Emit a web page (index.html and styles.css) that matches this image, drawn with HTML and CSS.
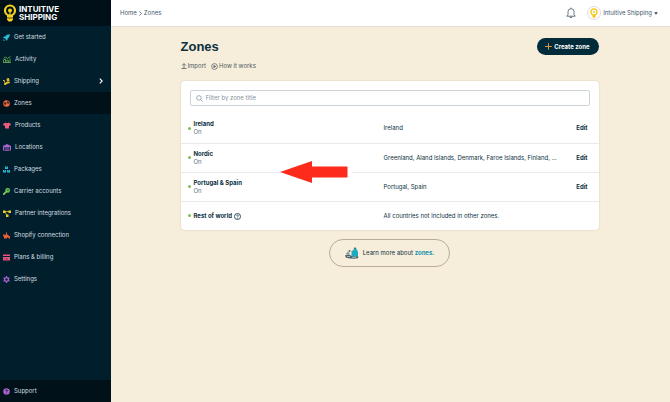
FILE: index.html
```html
<!DOCTYPE html>
<html lang="en">
<head>
  <meta charset="UTF-8" />
  <meta name="viewport" content="width=device-width, initial-scale=1.0"/>
  <title>Zones - Intuitive Shipping</title>
  <link rel="stylesheet" href="styles.css">
</head>
<body>
  <aside class="sidebar">
    <a class="logo" href="#">
      <svg width="14" height="18" viewBox="0 0 14 18"><circle cx="7" cy="6.5" r="5" fill="none" stroke="#f6cf1d" stroke-width="2.2"/><circle cx="7" cy="6.5" r="2" fill="#f6cf1d"/><path d="M4 11h6v4.500l-1.500 2h-3L4 15.500z" fill="#f6cf1d"/><path d="M6.500 8v5h1V8z" fill="#f6cf1d"/><path d="M4 14h6" stroke="#001018" stroke-width=".7"/></svg>
      <span>INTUITIVE<br>SHIPPING</span>
    </a>
    <nav class="nav">
      <a href="#"><svg width="7" height="7" viewBox="0 0 14 14"><path d="M13.500.5C8 .5 6 3 4.500 5H2L.3 8.200l3 .2 2.300 2.300.2 3L9 12V9.500c2-1.500 4.500-3.500 4.500-9zM1 10l3 3-3.500.6z" fill="#27bfd6"/></svg>Get started</a>
      <a href="#"><svg width="8" height="7" viewBox="0 0 16 14"><path d="M1 5l4-3 4 3 6-4M1 13V8l4-2v7M8 13V8l3 1v4M14 13V5M0 13h16" fill="none" stroke="#58a04b" stroke-width="1.900"/></svg>Activity</a>
      <a href="#"><svg width="7" height="7" viewBox="0 0 14 14"><path d="M7 1l5-1 1 6-5 1zM0 4h3l2 6 9-2v2l-7 2a2.500 2.500 0 1 1-4-2L2 6H0zM6 8l7-1v1l-7 2z" fill="#eab92d"/></svg>Shipping<svg class="chevron" width="4" height="6" viewBox="0 0 4 6"><path d="M.8.600L3.200 3 .8 5.400" fill="none" stroke="#fff" stroke-width="1.100"/></svg></a>
      <a class="active" href="#"><svg width="7" height="7" viewBox="0 0 14 14"><circle cx="7" cy="7" r="6.500" fill="#ee6840"/><path d="M2 4l4 1 1 2-2 2v2L3 9zM9 2l3 2-1 4-2-1-1-3z" fill="#3b1a18"/></svg>Zones</a>
      <a href="#"><svg width="8" height="7" viewBox="0 0 16 14"><path d="M5 1q3 2.500 6 0l5 3-2 4-2-1v6H4V7L2 8 0 4z" fill="#ee5a7c"/></svg>Products</a>
      <a href="#"><svg width="8" height="7" viewBox="0 0 16 14"><path d="M0 4l8-4 8 4v9h-2V6H2v7H0zM3 7h10v1.500H3zM3 9.500h10V11H3zM3 12h10v1.500H3z" fill="#a965cf"/></svg>Locations</a>
      <a href="#"><svg width="7" height="7" viewBox="0 0 14 14"><path d="M4 1h6v5H4zM0 8h6v5H0zM8 8h6v5H8z" fill="#27b7d0"/><path d="M6.500 1h1v2h-1zM2.500 8h1v2h-1zM10.500 8h1v2h-1z" fill="#001e2b"/></svg>Packages</a>
      <a href="#"><svg width="7" height="7" viewBox="0 0 14 14"><path d="M9 0a4.700 4.700 0 1 1-1 9.200L7 10H5.500v2H3.500v2H0v-3l5-5A4.700 4.700 0 0 1 9 0z" fill="#6ec253"/><circle cx="10" cy="4" r="1.300" fill="#001e2b"/></svg>Carrier accounts</a>
      <a href="#"><svg width="8" height="7" viewBox="0 0 16 14"><path d="M3 3h10M3 3l5 8" fill="none" stroke="#f0cc28" stroke-width="1.500"/><path d="M0 1h5v5H0zM11 1h5v5h-5zM6 9h5v5H6z" fill="#f0cc28"/></svg>Partner integrations</a>
      <a href="#"><svg width="7" height="7" viewBox="0 0 14 14"><path d="M1 4h2v3l3-2V1h2v4l3 1v2h3v5h-3v-2H8v2H2V9H0z" fill="#e9623d"/></svg>Shopify connection</a>
      <a href="#"><svg width="7" height="7" viewBox="0 0 14 14"><path d="M0 1h14v3H0zM0 6h14v7H0z" fill="#e5557c"/><path d="M2 10h3M6 10h4" stroke="#5a2038" stroke-width="1.300"/></svg>Plans &amp; billing</a>
      <a href="#"><svg width="7" height="7" viewBox="0 0 14 14"><circle cx="7" cy="7" r="3.800" fill="none" stroke="#a965cf" stroke-width="2.800"/><path d="M7 0v3M7 11v3M1 3.500l2.500 1.500M10.500 9L13 10.500M1 10.500L3.500 9M10.500 5L13 3.500" stroke="#a965cf" stroke-width="2.500"/></svg>Settings</a>
    </nav>
    <a class="support" href="#"><svg width="7" height="7" viewBox="0 0 14 14"><circle cx="7" cy="7" r="6.500" fill="#a965cf"/><path d="M5 5.500C5 3 9 3 9 5.300c0 1.500-2 1.500-2 3.200M7 9.800v1.500" fill="none" stroke="#001018" stroke-width="1.500"/></svg>Support</a>
  </aside>

  <div class="page">
    <header class="topbar">
      <nav class="breadcrumb" aria-label="Breadcrumb">
        <a href="#">Home</a>
        <svg width="3" height="5" viewBox="0 0 3 5"><path d="M.5.500l2 2-2 2" fill="none" stroke="#42586a" stroke-width=".8"/></svg>
        <a href="#">Zones</a>
      </nav>
      <div class="account">
        <button class="bell" aria-label="Notifications">
          <svg width="10" height="12" viewBox="0 0 10 12"><path d="M.700 9.200h8.600L8 7.600V4.700a3 3 0 0 0-6 0v2.900zM5 1.700V.6M3.700 9.400a1.300 1.300 0 0 0 2.600 0" fill="none" stroke="#465a68" stroke-width=".8" stroke-linejoin="round"/></svg>
        </button>
        <button class="user">
          <svg width="14" height="14" viewBox="0 0 14 14"><circle cx="7" cy="7" r="6.500" fill="#fff" stroke="#cfcfcb" stroke-width=".7"/><circle cx="7" cy="6" r="3" fill="none" stroke="#f2cb25" stroke-width="1.400"/><circle cx="7" cy="6" r="1" fill="#f2cb25"/><path d="M5.500 9h3v2L7.800 12H6.200l-.7-1z" fill="#f2cb25"/></svg>
          Intuitive Shipping
          <svg width="4" height="3" viewBox="0 0 4 3"><path d="M.2.300h3.600L2 2.700z" fill="#2c4354"/></svg>
        </button>
      </div>
    </header>

    <main class="content">
      <div class="title-row">
        <h1>Zones</h1>
        <button class="create"><svg width="7" height="7" viewBox="0 0 7 7"><path d="M3.500.200v6.600M.2 3.500h6.600" stroke="#dc9648" stroke-width="1"/></svg>Create zone</button>
      </div>
      <div class="links">
        <a href="#"><svg width="6" height="6" viewBox="0 0 6 6"><path d="M3 5V.800M1.300 2.300L3 .6l1.700 1.700M.4 5.500h5.200" fill="none" stroke="#4d5b62" stroke-width=".8"/></svg>Import</a>
        <a href="#"><svg width="7" height="7" viewBox="0 0 7 7"><circle cx="3.500" cy="3.500" r="2.900" fill="none" stroke="#4d5b62" stroke-width=".7"/><path d="M2.500 1.900l2.800 1.600-2.800 1.600z" fill="#4d5b62"/></svg>How it works</a>
      </div>

      <section class="card">
        <label class="search">
          <svg width="7" height="7" viewBox="0 0 7 7"><circle cx="2.900" cy="2.900" r="2.300" fill="none" stroke="#7b8994" stroke-width=".7"/><path d="M4.600 4.600l2 2" stroke="#7b8994" stroke-width=".8"/></svg>
          <input type="text" placeholder="Filter by zone title" aria-label="Filter by zone title">
        </label>
        <table class="zones">
          <tr>
            <td class="status"><span class="dot"></span></td>
            <td class="name"><b>Ireland</b><small>On</small></td>
            <td class="countries">Ireland</td>
            <td class="action"><a href="#">Edit</a></td>
          </tr>
          <tr>
            <td class="status"><span class="dot"></span></td>
            <td class="name"><b>Nordic</b><small>On</small></td>
            <td class="countries">Greenland, Aland Islands, Denmark, Faroe Islands, Finland, …</td>
            <td class="action"><a href="#">Edit</a></td>
          </tr>
          <tr>
            <td class="status"><span class="dot"></span></td>
            <td class="name"><b>Portugal &amp; Spain</b><small>On</small></td>
            <td class="countries">Portugal, Spain</td>
            <td class="action"><a href="#">Edit</a></td>
          </tr>
          <tr>
            <td class="status"><span class="dot"></span></td>
            <td class="name"><b>Rest of world <svg width="7" height="7" viewBox="0 0 12 12"><circle cx="6" cy="6" r="5.200" fill="none" stroke="#0b3040" stroke-width="1.400"/><path d="M4.500 5C4.500 3 7.500 3 7.500 4.800 7.500 6 6 6 6 7.300M6 8.200v1.300" fill="none" stroke="#0b3040" stroke-width="1.300"/></svg></b></td>
            <td class="countries">All countries not included in other zones.</td>
            <td class="action"></td>
          </tr>
        </table>
        <svg class="arrow" width="72" height="22" viewBox="0 0 72 22"><path d="M62 5h10v12H62z" fill="#fff"/><path d="M0 11L32 0v5.500h35.500v11H32V22z" fill="#fc2b1c"/></svg>
      </section>

      <div class="learn">
        <svg width="14" height="12" viewBox="0 0 14 12"><path d="M6.500 8V4l2-1L9.500.5l2 1.500L13 5v5H7z" fill="#21a9bd"/><path d="M9 2l1-1.500L11 2" stroke="#0c4b5a" fill="none" stroke-width=".6"/><path d="M0 8.500q3-2 6 0t7.500 1l-.5 1.800q-5 1-12-.5z" fill="#52666d"/><path d="M1 6.500l2-2 2 2.500-2 1z" fill="#8b9899"/><circle cx="4.500" cy="4" r="1" fill="#52666d"/><path d="M2 9.500h3M7 10.300h4" stroke="#e8e1d1" stroke-width=".6"/></svg>
        <span>Learn more about <a href="#">zones.</a></span>
      </div>
    </main>
  </div>
</body>
</html>
```
FILE: styles.css
```css
* {
  box-sizing: border-box;
}

body {
  margin: 0;
  min-height: 100vh;
  display: flex;
  font-family: Inter, "Liberation Sans", Arial, sans-serif;
  font-size: 6px;
  line-height: 8px;
  color: #0b3040;
  background: #f6eddb;
}

a {
  color: inherit;
  text-decoration: none;
}

button {
  padding: 0;
  border: none;
  background: none;
  font: inherit;
  color: inherit;
  cursor: pointer;
}

svg {
  flex: none;
}

.sidebar {
  width: 111px;
  flex: none;
  display: flex;
  flex-direction: column;
  background: #001e2b;
  color: #d5dee2;
}

.logo {
  height: 26px;
  padding: 0 3px;
  display: flex;
  align-items: center;
  gap: 2px;
  background: #001018;
  color: #fff;
  font-size: 8px;
  font-weight: bold;
  line-height: 8px;
}

.nav {
  flex: 1;
}

.nav a,
.support {
  height: 22px;
  padding: 0 8px 0 3px;
  display: flex;
  align-items: center;
  gap: 4px;
}

.nav .active,
.support {
  background: #001119;
}

.chevron {
  margin-left: auto;
}

.page {
  flex: 1;
  min-width: 0;
}

.topbar {
  height: 27px;
  padding: 0 12px 0 9px;
  display: flex;
  align-items: center;
  justify-content: space-between;
  background: #fff;
  border-bottom: 1px solid #e3dfd6;
  color: #42586a;
}

.breadcrumb,
.account,
.user {
  display: flex;
  align-items: center;
  gap: 2px;
}

.account {
  gap: 11px;
}

.bell svg {
  display: block;
}

.content {
  max-width: 420px;
  margin: 0 auto;
  padding: 11px 2px 0 0;
}

.title-row {
  display: flex;
  align-items: center;
  justify-content: space-between;
}

h1 {
  margin: 0;
  font-family: "Liberation Sans", Arial, sans-serif;
  font-size: 13px;
  line-height: 17px;
}

.create {
  height: 17px;
  padding: 0 9px 0 8px;
  display: flex;
  align-items: center;
  gap: 2px;
  border-radius: 9px;
  background: #002b3a;
  color: #fff;
  font-weight: bold;
}

.links {
  margin: 7px 0 11px;
  display: flex;
  gap: 5px;
  color: #4d5b62;
}

.links a {
  display: flex;
  align-items: center;
  gap: 1px;
}

.card {
  position: relative;
  padding-top: 9px;
  border-radius: 4px;
  background: #fff;
  box-shadow: 0 0 2px rgba(80, 60, 20, 0.2);
}

.search {
  height: 16px;
  margin: 0 9px 8px;
  padding: 0 5px;
  display: flex;
  align-items: center;
  gap: 3px;
  border: 1px solid #ccd3d8;
  border-radius: 2px;
}

.search input {
  flex: 1;
  min-width: 0;
  padding: 0;
  border: none;
  outline: none;
  background: none;
  font: inherit;
}

.search input::placeholder {
  color: #85919b;
}

.zones {
  width: 100%;
  table-layout: fixed;
  border-collapse: collapse;
}

.zones td {
  height: 29px;
  padding: 0;
}

.zones tr + tr td {
  border-top: 1px solid #e6eaec;
}

.zones .status {
  width: 13px;
}

.dot {
  display: block;
  width: 3px;
  height: 3px;
  margin-left: 7px;
  border-radius: 50%;
  background: #7dbb5e;
}

.name b,
.name small {
  display: block;
}

.name small {
  font-size: 6px;
  color: #66757e;
}

.name svg {
  margin-left: 1px;
  vertical-align: -2px;
}

.zones .countries {
  width: 180px;
  white-space: nowrap;
}

.zones .action {
  width: 35px;
  padding-right: 11px;
  text-align: right;
  font-weight: bold;
}

/* pointer drawn over the zone rows */
.arrow {
  position: absolute;
  top: 80px;
  left: 99px;
}

.learn {
  width: fit-content;
  height: 28px;
  margin: 9px auto 0;
  padding: 0 15px;
  display: flex;
  align-items: center;
  gap: 4px;
  border: 1px solid #b9ac98;
  border-radius: 14px;
}

.learn a {
  color: #1795aa;
  font-weight: bold;
}
```
